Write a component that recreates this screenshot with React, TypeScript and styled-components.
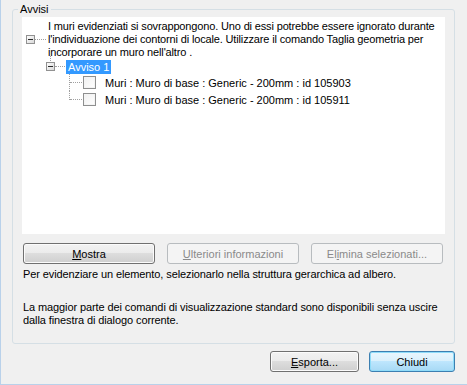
import React from "react";
import styled, { createGlobalStyle } from "styled-components";

const GlobalStyle = createGlobalStyle`
  html, body {
    margin: 0;
    padding: 0;
    background: #f0f0f0;
  }
  * {
    box-sizing: border-box;
  }
`;

const Dialog = styled.div`
  width: 467px;
  height: 385px;
  background: #f0f0f0;
  border-left: 1px solid #b9d1ea;
  border-bottom: 1px solid #b9d1ea;
  padding: 3px 12px 0 11px;
  display: flex;
  flex-direction: column;
  font-family: "Liberation Sans", Arial, sans-serif;
  font-size: 11px;
  color: #000;
`;

const Group = styled.fieldset`
  margin: 0;
  padding: 0;
  height: 341px;
  border: 1px solid #d5dfe5;
  border-radius: 3px;
  min-width: 0;
`;

const Legend = styled.legend`
  margin-left: 5px;
  padding: 0 2px;
  line-height: 13px;
`;

const GroupBody = styled.div`
  padding: 1px 9px 0 9px;
  display: flex;
  flex-direction: column;
`;

const Tree = styled.div`
  height: 217px;
  background: #fff;
  padding-top: 3px;
  display: flex;
  flex-direction: column;
`;

const RootRow = styled.div`
  display: flex;
  align-items: center;
  padding-left: 4px;
`;

const HLine = styled.span<{ $w: number }>`
  width: ${(p) => p.$w}px;
  height: 0;
  border-top: 1px dotted #a0a0a0;
`;

const RootLabel = styled.div`
  margin-left: 2px;
  line-height: 13px;
  white-space: nowrap;
  letter-spacing: -0.15px;
`;

const NodeRow = styled.div`
  position: relative;
  height: 15px;
  display: flex;
  align-items: center;
  padding-left: 24px;

  &::before {
    content: "";
    position: absolute;
    left: 28px;
    top: -3px;
    height: 5px;
    border-left: 1px dotted #a0a0a0;
  }
`;

const Selected = styled.span`
  margin-left: 1px;
  padding: 0 2px;
  line-height: 14px;
  background: #3399ff;
  color: #fff;
`;

const LeafRow = styled.div`
  height: 17px;
  display: flex;
  align-items: center;
  padding-left: 47px;
`;

const Connector = styled.span<{ $last?: boolean }>`
  position: relative;
  width: 13px;
  height: 17px;

  &::before {
    content: "";
    position: absolute;
    left: 0;
    top: 0;
    height: ${(p) => (p.$last ? "9px" : "17px")};
    border-left: 1px dotted #a0a0a0;
  }
  &::after {
    content: "";
    position: absolute;
    left: 1px;
    right: 0;
    top: 8px;
    border-top: 1px dotted #a0a0a0;
  }
`;

const Check = styled.span`
  width: 13px;
  height: 13px;
  margin-left: 1px;
  border: 1px solid #8e8f8f;
  background: linear-gradient(135deg, #f0f0f0, #ffffff);
  box-shadow: inset 0 0 0 1px #f4f4f4;
`;

const LeafLabel = styled.span`
  margin-left: 9px;
  white-space: nowrap;
`;

const ButtonRow = styled.div`
  display: flex;
  gap: 12px;
  margin-top: 9px;
  padding-left: 1px;
`;

const Button = styled.button<{ $w: number; $primary?: boolean }>`
  width: ${(p) => p.$w}px;
  height: 21px;
  padding: 0;
  border: 1px solid ${(p) => (p.$primary ? "#3c7fb1" : "#707070")};
  border-radius: 3px;
  background: ${(p) =>
    p.$primary
      ? "linear-gradient(#eaf6fd 0%, #d9f0fc 50%, #bee6fd 50%, #a7d9f5 100%)"
      : "linear-gradient(#f2f2f2 0%, #ebebeb 50%, #dddddd 50%, #cfcfcf 100%)"};
  box-shadow: inset 0 0 0 1px ${(p) => (p.$primary ? "#8fdcf9" : "#fbfbfb")};
  font-family: "Liberation Sans", Arial, sans-serif;
  font-size: 11px;
  color: #000;

  &:disabled {
    border-color: #b8bcbf;
    background: #f4f4f4;
    box-shadow: none;
    color: #8a8a8a;
  }
`;

const Hint = styled.p<{ $top: number }>`
  margin: ${(p) => p.$top}px 0 0 1px;
  line-height: 13px;
  white-space: nowrap;
  letter-spacing: -0.1px;
`;

const Footer = styled.div`
  display: flex;
  justify-content: flex-end;
  gap: 10px;
  margin-top: 7px;
`;

const Expander = () => (
  <svg width="9" height="9" viewBox="0 0 9 9">
    <defs>
      <linearGradient id="exp" x1="0" y1="0" x2="1" y2="1">
        <stop offset="0" stopColor="#ffffff" />
        <stop offset="1" stopColor="#d6d6d6" />
      </linearGradient>
    </defs>
    <rect x="0.5" y="0.5" width="8" height="8" fill="url(#exp)" stroke="#919191" />
    <rect x="2" y="4" width="5" height="1" fill="#2a2a2a" />
  </svg>
);

const leaves = [
  "Muri : Muro di base : Generic - 200mm : id 105903",
  "Muri : Muro di base : Generic - 200mm : id 105911",
];

export default function App() {
  return (
    <>
      <GlobalStyle />
      <Dialog>
        <Group>
          <Legend>Avvisi</Legend>
          <GroupBody>
            <Tree>
              <RootRow>
                <Expander />
                <HLine $w={11} />
                <RootLabel>
                  I muri evidenziati si sovrappongono. Uno di essi potrebbe essere ignorato durante
                  <br />
                  l'individuazione dei contorni di locale. Utilizzare il comando Taglia geometria per
                  <br />
                  incorporare un muro nell'altro .
                </RootLabel>
              </RootRow>
              <NodeRow>
                <Expander />
                <HLine $w={10} />
                <Selected>Avviso 1</Selected>
              </NodeRow>
              {leaves.map((text, i) => (
                <LeafRow key={i}>
                  <Connector $last={i === leaves.length - 1} />
                  <Check />
                  <LeafLabel>{text}</LeafLabel>
                </LeafRow>
              ))}
            </Tree>
            <ButtonRow>
              <Button $w={132}>
                <u>M</u>ostra
              </Button>
              <Button $w={132} disabled>
                <u>U</u>lteriori informazioni
              </Button>
              <Button $w={132} disabled>
                El<u>i</u>mina selezionati...
              </Button>
            </ButtonRow>
            <Hint $top={4}>
              Per evidenziare un elemento, selezionarlo nella struttura gerarchica ad albero.
            </Hint>
            <Hint $top={20}>
              La maggior parte dei comandi di visualizzazione standard sono disponibili senza uscire
              <br />
              dalla finestra di dialogo corrente.
            </Hint>
          </GroupBody>
        </Group>
        <Footer>
          <Button $w={89}>
            <u>E</u>sporta...
          </Button>
          <Button $w={86} $primary>
            Chiudi
          </Button>
        </Footer>
      </Dialog>
    </>
  );
}
